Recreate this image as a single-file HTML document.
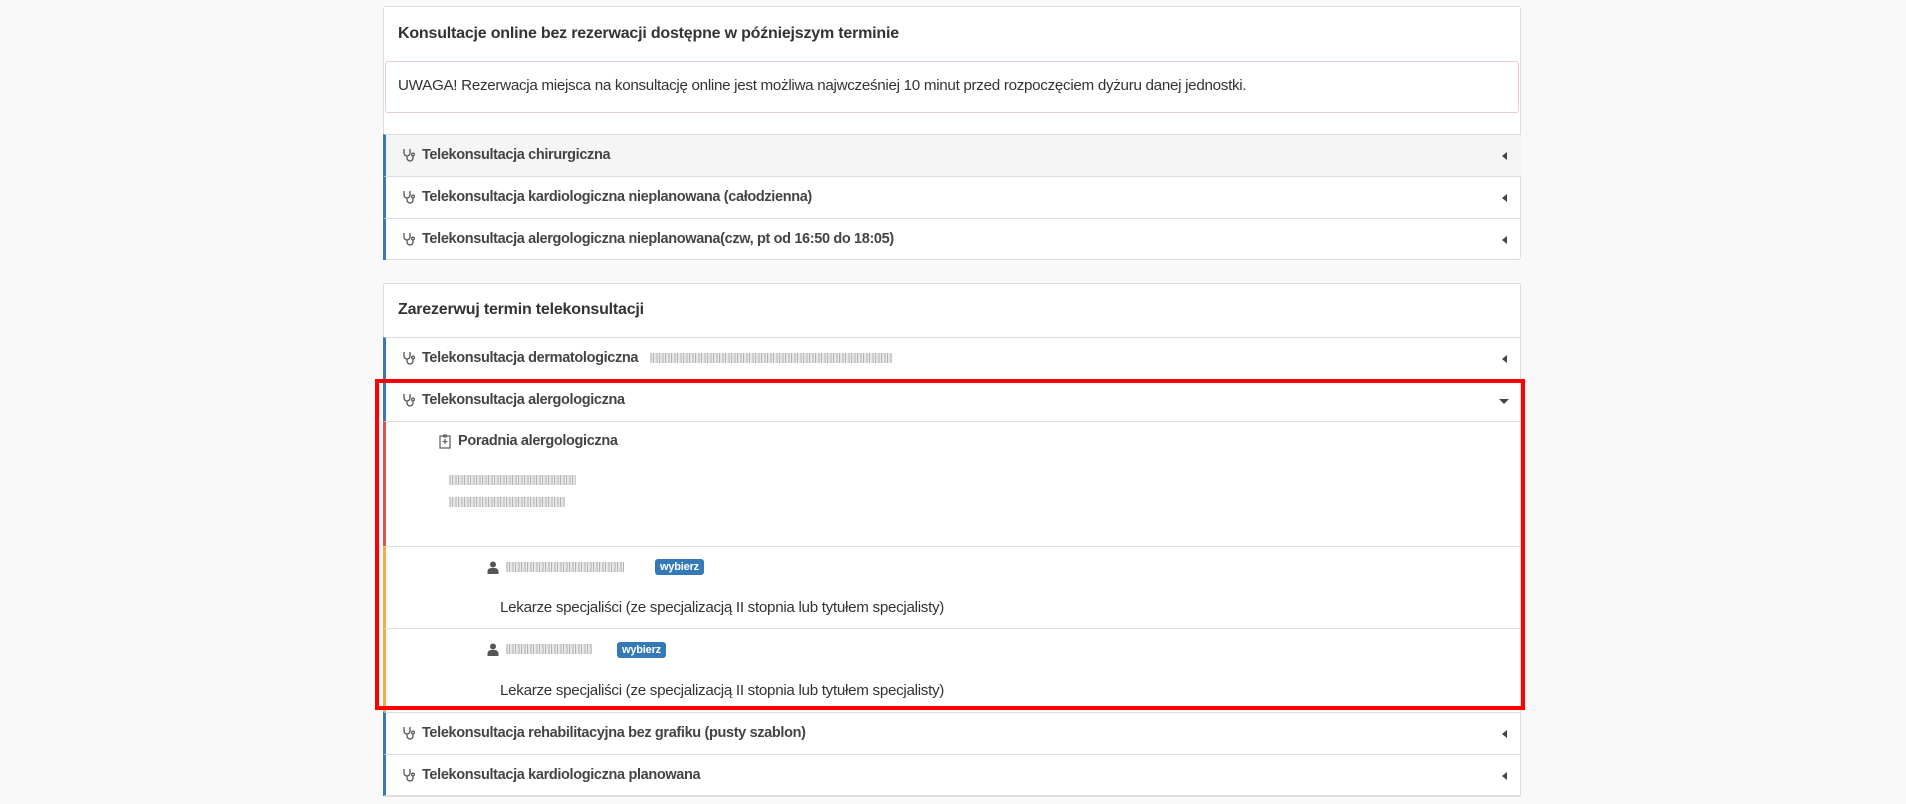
<!DOCTYPE html>
<html><head><meta charset="utf-8"><style>
*{box-sizing:border-box;margin:0;padding:0}
body{width:1906px;height:804px;background:#f9f9f9;font-family:"Liberation Sans",sans-serif;color:#333;position:relative;overflow:hidden}
.abs{position:absolute}
.panel{position:absolute;left:383px;width:1138px;background:#fff;border:1px solid #ddd;border-radius:3px}
.hdr{position:absolute;left:14px;font-size:16px;font-weight:bold;color:#333;letter-spacing:-0.2px}
.row{position:absolute;left:383px;width:1138px;border-top:1px solid #ddd;border-left:3px solid #337ab7;font-size:14.5px;color:#444;font-weight:bold;letter-spacing:-0.35px}
.row .t{position:absolute;left:36px;top:12px;white-space:nowrap}
.row svg.i{position:absolute;left:16px;top:13px}
.car{position:absolute;right:14px;top:17px;width:0;height:0;border-top:4px solid transparent;border-bottom:4px solid transparent;border-right:5px solid #444}
.down{position:absolute;right:12px;top:19px;width:0;height:0;border-left:5px solid transparent;border-right:5px solid transparent;border-top:5px solid #444}
.blur{position:absolute;height:10px;background:repeating-linear-gradient(90deg,#bbb 0 2px,#e6e6e6 2px 3px,#999 3px 4px,#ddd 4px 6px);opacity:.75}
.btn{position:absolute;background:#337ab7;color:#fff;font-size:11px;font-weight:bold;border-radius:3px;padding:2px 5px;letter-spacing:-0.2px}
.lbl{position:absolute;font-size:15.2px;color:#333;letter-spacing:-0.3px;white-space:nowrap}
</style></head><body>
<svg width="0" height="0" style="position:absolute"><defs>
<symbol id="st" viewBox="0 0 14 14"><path d="M2 1v4a3 3 0 0 0 6 0V1M5 8v2a3 3 0 0 0 6 0V8" fill="none" stroke="#555" stroke-width="1.3"/><circle cx="11" cy="6.5" r="1.4" fill="none" stroke="#555" stroke-width="1.2"/></symbol>
</defs></svg>

<div class="panel" style="top:6px;height:254px">
  <div class="hdr" style="top:18px">Konsultacje online bez rezerwacji dostępne w późniejszym terminie</div>
  <div class="abs" style="left:1px;top:54px;width:1134px;height:52px;border:1px solid #ebccd1;border-radius:3px;background:#fff"></div>
  <div class="abs" style="left:14px;top:70px;font-size:15.2px;color:#333;letter-spacing:-0.3px;white-space:nowrap">UWAGA! Rezerwacja miejsca na konsultację online jest możliwa najwcześniej 10 minut przed rozpoczęciem dyżuru danej jednostki.</div>
</div>
<div class="row" style="top:134px;height:42px;background:#f5f5f5"><svg class="i" width="14" height="14"><use href="#st"/></svg><span class="t">Telekonsultacja chirurgiczna</span><div class="car"></div></div>
<div class="row" style="top:176px;height:42px"><svg class="i" width="14" height="14"><use href="#st"/></svg><span class="t">Telekonsultacja kardiologiczna nieplanowana (całodzienna)</span><div class="car"></div></div>
<div class="row" style="top:218px;height:42px"><svg class="i" width="14" height="14"><use href="#st"/></svg><span class="t">Telekonsultacja alergologiczna nieplanowana(czw, pt od 16:50 do 18:05)</span><div class="car"></div></div>

<div class="panel" style="top:283px;height:514px">
  <div class="hdr" style="top:17px">Zarezerwuj termin telekonsultacji</div>
</div>
<div class="row" style="top:337px;height:42px"><svg class="i" width="14" height="14"><use href="#st"/></svg><span class="t">Telekonsultacja dermatologiczna</span><div class="blur" style="left:264px;top:15px;width:242px"></div><div class="car"></div></div>
<div class="row" style="top:379px;height:42px"><svg class="i" width="14" height="14"><use href="#st"/></svg><span class="t">Telekonsultacja alergologiczna</span><div class="down"></div></div>
<div class="abs" style="left:383px;top:421px;width:1138px;height:125px;border-top:1px solid #ddd;border-left:3px solid #d9534f"></div>
<svg class="abs" style="left:439px;top:434px" width="12" height="15" viewBox="0 0 12 15"><rect x="1" y="2" width="10" height="12" fill="none" stroke="#666" stroke-width="1.3"/><rect x="4" y="0.5" width="4" height="3" fill="#666"/><path d="M6 5v5M3.5 7.5h5" stroke="#666" stroke-width="1.3"/></svg>
<div class="abs" style="left:458px;top:433px;font-size:14.5px;font-weight:bold;color:#444;letter-spacing:-0.35px">Poradnia alergologiczna</div>
<div class="blur" style="left:449px;top:475px;width:127px"></div>
<div class="blur" style="left:449px;top:497px;width:116px"></div>

<div class="abs" style="left:383px;top:546px;width:1138px;height:82px;border-top:1px solid #ddd;border-left:3px solid #f0ad4e"></div>
<svg class="abs" style="left:487px;top:561px" width="12" height="13" viewBox="0 0 12 13"><circle cx="6" cy="3.5" r="3" fill="#555"/><path d="M0.5 13v-3a4 4 0 0 1 4-3h3a4 4 0 0 1 4 3v3z" fill="#555"/></svg>
<div class="blur" style="left:506px;top:562px;width:118px"></div>
<div class="btn" style="left:655px;top:559px">wybierz</div>
<div class="lbl" style="left:500px;top:599px">Lekarze specjaliści (ze specjalizacją II stopnia lub tytułem specjalisty)</div>

<div class="abs" style="left:383px;top:628px;width:1138px;height:84px;border-top:1px solid #ddd;border-left:3px solid #f0ad4e"></div>
<svg class="abs" style="left:487px;top:643px" width="12" height="13" viewBox="0 0 12 13"><circle cx="6" cy="3.5" r="3" fill="#555"/><path d="M0.5 13v-3a4 4 0 0 1 4-3h3a4 4 0 0 1 4 3v3z" fill="#555"/></svg>
<div class="blur" style="left:506px;top:644px;width:86px"></div>
<div class="btn" style="left:617px;top:642px">wybierz</div>
<div class="lbl" style="left:500px;top:682px">Lekarze specjaliści (ze specjalizacją II stopnia lub tytułem specjalisty)</div>

<div class="row" style="top:712px;height:42px"><svg class="i" width="14" height="14"><use href="#st"/></svg><span class="t">Telekonsultacja rehabilitacyjna bez grafiku (pusty szablon)</span><div class="car"></div></div>
<div class="row" style="top:754px;height:42px;border-bottom:1px solid #ddd"><svg class="i" width="14" height="14"><use href="#st"/></svg><span class="t">Telekonsultacja kardiologiczna planowana</span><div class="car"></div></div>

<div class="abs" style="left:375px;top:379px;width:1150px;height:331px;border:4px solid #f00"></div>
</body></html>
